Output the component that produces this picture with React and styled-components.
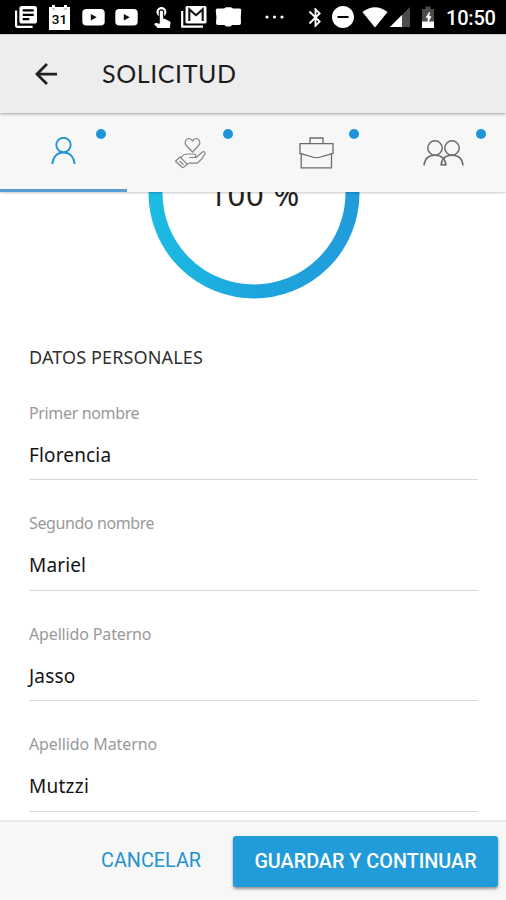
import styled, { createGlobalStyle } from 'styled-components';
import {
	MdLibraryBooks,
	MdTouchApp,
	MdBluetooth,
	MdDoNotDisturbOn,
	MdArrowBack,
} from 'react-icons/md';

const FIELDS = [
	{ id: 1, label: 'Primer nombre', value: 'Florencia', labelSpacing: -0.35, spacing: 0.15 },
	{ id: 2, label: 'Segundo nombre', value: 'Mariel', labelSpacing: -0.4, spacing: 0.15 },
	{ id: 3, label: 'Apellido Paterno', value: 'Jasso', labelSpacing: -0.15, spacing: 0.15 },
	{ id: 4, label: 'Apellido Materno', value: 'Mutzzi', labelSpacing: -0.1, spacing: 0.25 },
];

const CalendarIcon = () => (
	<svg width="23" height="25" viewBox="0 0 23 25">
		<path d="M1 2h3V0h3v2h9V0h3v2h3v23H1z" fill="#fff" />
		<path d="M4 4h3M16 4h3" stroke="#999" />
		<text
			x="11.5"
			y="19"
			textAnchor="middle"
			fontFamily="Roboto, sans-serif"
			fontSize="13.5"
			fontWeight="500"
		>
			31
		</text>
	</svg>
);

const VideoIcon = () => (
	<svg width="23" height="18" viewBox="0 0 23 18">
		<rect x=".3" y="1" width="22.4" height="16.5" rx="4" fill="#fff" />
		<path d="M8.8 6v6.6l6-3.3z" fill="#111" />
	</svg>
);

const MailIcon = () => (
	<svg width="26" height="22" viewBox="0 0 26 22" fill="none">
		<path d="M1.2 5v15.7H22" stroke="#fff" strokeWidth="2.2" />
		<rect x="4.5" y="0" width="21" height="17.5" rx="1.5" fill="#fff" />
		<path d="M8.3 15V3.4l6.7 5.8 6.7-5.8V15" stroke="#111" strokeWidth="2.1" />
	</svg>
);

const CaseIcon = () => (
	<svg width="27" height="20" viewBox="0 0 27 20">
		<path
			d="M2 1.5h7L11 .3h5l2 1.2h7q1.5.5 1.2 2l-.4 6.5.2 6q0 2-2 2h-7l-1.5 1.5h-4L9.5 18H3q-2 0-2-2l.4-6L.8 3.5Q.5 2 2 1.5z"
			fill="#fff"
		/>
	</svg>
);

const DotsIcon = () => (
	<svg width="20" height="4" viewBox="0 0 20 4" fill="#fff">
		<circle cx="2" cy="2" r="1.6" />
		<circle cx="9.5" cy="2" r="1.6" />
		<circle cx="17" cy="2" r="1.6" />
	</svg>
);

const WifiIcon = () => (
	<svg width="26" height="21" viewBox="0 0 26 21">
		<path d="M.4 5Q13-4.6 25.6 5L13 20.6z" fill="#fff" />
	</svg>
);

const SignalIcon = () => (
	<svg width="20" height="20" viewBox="0 0 20 20">
		<path d="M0 20L20 0v20z" fill="#4c4c4c" />
		<path d="M0 20L12 8v12z" fill="#fff" />
	</svg>
);

const BatteryIcon = () => (
	<svg width="14" height="22" viewBox="0 0 14 22">
		<path d="M1 3h3.5V.5h5V3H13v19H1z" fill="#4c4c4c" />
		<path d="M1 15.5h12V22H1z" fill="#fff" />
		<path d="M8.6 6L5 11.5h2v5l3-6H8z" fill="#fff" stroke="#fff" strokeWidth=".7" />
	</svg>
);

const PersonIcon = () => (
	<svg width="26" height="28" viewBox="0 0 26 28" fill="none">
		<g stroke="#2495d3" strokeWidth="1.9">
			<circle cx="13.5" cy="8" r="7.2" />
			<path d="M2.3 27C3 20 7 15.5 13.5 15.5S24 20 24.7 27" />
		</g>
	</svg>
);

const HandHeartIcon = () => (
	<svg width="32" height="32" viewBox="0 0 32 32" fill="none">
		<g stroke="#858585" strokeWidth="1.2" strokeLinejoin="round">
			<path d="M18.5 15L12.300 8.500C10 6 11.500 2 14.500 1.500c2 0 3.300 1 4 2.600.7-1.600 2-2.600 4-2.600C25.500 2 27 6 24.700 8.500z" />
			<path d="M7 20.700C8.500 18 10.500 17 13.500 17H20c2.500 0 2.300 3.500 0 3.500h-4.500H22l5-4.300 1.500-1.200c1.800-.8 3 .4 2.500 2l-3.500 5.200L23 26.200h-8L12.500 27.500" />
			<path d="M6 20l-4.500 4.300 6.300 5.700c.8.7 1.700.6 2.400-.1l2-1.700c.7-.8.6-1.400 0-2z" />
			<path d="M5.500 24l4 3.700" />
		</g>
	</svg>
);

const BriefcaseIcon = () => (
	<svg width="36" height="32" viewBox="0 0 36 32" fill="none">
		<g stroke="#6c6c6c" strokeWidth="1.3">
			<path d="M12 6.5V1h13v5.5" />
			<path d="M2 6.600h33v9.800L22.500 20q-4 1.300-8 0L2 16.400z" />
			<path d="M3.2 16.500v14.300h30.300V16.500" />
		</g>
	</svg>
);

const PeopleIcon = () => (
	<svg width="42" height="28" viewBox="0 0 42 28" fill="none">
		<g stroke="#6c6c6c" strokeWidth="1.5">
			<circle cx="13" cy="8" r="7.2" />
			<circle cx="30" cy="8" r="7.2" />
			<path d="M2 25.500C2.500 19 6.500 15.300 13 15.300S23.500 19 24 25.500" />
			<path d="M19 25.500C19.500 19 23.500 15.300 30 15.300S40.500 19 41 25.500" />
			<path d="M19 24.800h5" />
		</g>
	</svg>
);

const TABS = [
	{ id: 'personal', Icon: PersonIcon, active: true, offset: 1 },
	{ id: 'beneficiary', Icon: HandHeartIcon, offset: 3.5 },
	{ id: 'job', Icon: BriefcaseIcon, offset: 4 },
	{ id: 'references', Icon: PeopleIcon, offset: 5 },
];

const ProgressRing = () => (
	<Ring>
		<svg width="212" height="212" viewBox="0 0 212 212">
			<defs>
				<linearGradient id="ring" x1="0" y1="0" x2="1" y2="0">
					<stop offset="0" stopColor="#1bbbe2" />
					<stop offset=".5" stopColor="#1ca6dd" />
					<stop offset="1" stopColor="#219cdb" />
				</linearGradient>
			</defs>
			<circle
				cx="106"
				cy="106"
				r="98.5"
				fill="none"
				stroke="url(#ring)"
				strokeWidth="14"
			/>
		</svg>
		<Percent>100 %</Percent>
	</Ring>
);

const App = () => {
	return (
		<Screen>
			<GlobalStyle />
			<StatusBar>
				<StatusIcon $left={15} $width={22}>
					<MdLibraryBooks size={22} viewBox="2 2 20 20" />
				</StatusIcon>
				<StatusIcon $left={11} $width={23}>
					<CalendarIcon />
				</StatusIcon>
				<StatusIcon $left={11} $width={23}>
					<VideoIcon />
				</StatusIcon>
				<StatusIcon $left={10} $width={23}>
					<VideoIcon />
				</StatusIcon>
				<StatusIcon $left={15} $width={17}>
					<MdTouchApp size={22} viewBox="2 2 20 20" />
				</StatusIcon>
				<StatusIcon $left={11} $width={26}>
					<MailIcon />
				</StatusIcon>
				<StatusIcon $left={8} $width={27}>
					<CaseIcon />
				</StatusIcon>
				<StatusIcon $left={23} $width={20}>
					<DotsIcon />
				</StatusIcon>
				<StatusIcon $left={23} $width={14}>
					<MdBluetooth size={23} />
				</StatusIcon>
				<StatusIcon $left={10} $width={22}>
					<MdDoNotDisturbOn size={22} viewBox="2 2 20 20" />
				</StatusIcon>
				<StatusIcon $left={8} $width={26}>
					<WifiIcon />
				</StatusIcon>
				<StatusIcon $left={2} $width={20}>
					<SignalIcon />
				</StatusIcon>
				<StatusIcon $left={11} $width={14}>
					<BatteryIcon />
				</StatusIcon>
				<Clock>10:50</Clock>
			</StatusBar>
			<Header>
				<BackButton aria-label="Volver">
					<MdArrowBack size={22} viewBox="4 4 16 16" />
				</BackButton>
				<Title>SOLICITUD</Title>
			</Header>
			<Tabs>
				{TABS.map(({ id, Icon, active, offset }) => (
					<Tab key={id} $active={active} $offset={offset}>
						<Icon />
						<Badge />
					</Tab>
				))}
			</Tabs>
			<Content>
				<ProgressRing />
				<SectionTitle>DATOS PERSONALES</SectionTitle>
				{FIELDS.map((field) => (
					<Field key={field.id}>
						<Label $spacing={field.labelSpacing}>{field.label}</Label>
						<Value $spacing={field.spacing}>{field.value}</Value>
					</Field>
				))}
			</Content>
			<Footer>
				<CancelButton>CANCELAR</CancelButton>
				<SaveButton>GUARDAR Y CONTINUAR</SaveButton>
			</Footer>
		</Screen>
	);
};

export default App;

const GlobalStyle = createGlobalStyle`
	* {
		box-sizing: border-box;
	}

	body {
		margin: 0;
		font-family: 'Noto Sans', sans-serif;
	}

	svg {
		display: block;
		flex-shrink: 0;
	}
`;

const Screen = styled.div`
	display: flex;
	flex-direction: column;
	width: 506px;
	height: 900px;
	overflow: hidden;
	background-color: #fff;
`;

const StatusBar = styled.div`
	display: flex;
	align-items: center;
	height: 34px;
	flex-shrink: 0;
	background-color: #000;
	color: #fff;
	font-family: Roboto, sans-serif;
`;

const StatusIcon = styled.span`
	display: flex;
	align-items: center;
	justify-content: center;
	width: ${({ $width }) => $width}px;
	height: 34px;
	margin-left: ${({ $left }) => $left}px;
	flex-shrink: 0;
`;

const Clock = styled.span`
	margin-left: 11px;
	font-size: 20px;
	font-weight: 500;
	line-height: 34px;
	letter-spacing: -0.2px;
	padding-top: 2px;
`;

const Header = styled.header`
	display: flex;
	align-items: center;
	height: 79px;
	flex-shrink: 0;
	padding-left: 35px;
	background-color: #ededed;
	border-top: 1px solid #c9c9c9;
	z-index: 2;
	box-shadow: 0 1px 3px rgba(0, 0, 0, 0.35);
`;

const BackButton = styled.button`
	display: flex;
	padding: 0;
	border: 0;
	background: none;
	color: #222;
`;

const Title = styled.h1`
	margin: -2px 0 0 45px;
	font-family: Lato, sans-serif;
	font-size: 25px;
	font-weight: 400;
	line-height: 32px;
	letter-spacing: 0.6px;
	color: #1c1c1c;
`;

const Tabs = styled.nav`
	display: grid;
	grid-template-columns: repeat(4, 1fr);
	height: 79px;
	flex-shrink: 0;
	background-color: #f7f7f7;
	z-index: 1;
	box-shadow: 0 0 3px rgba(0, 0, 0, 0.4);
`;

const Tab = styled.div`
	position: relative;
	display: flex;
	align-items: center;
	justify-content: center;
	padding-top: ${({ $offset }) => Math.max($offset * 2 - 4, 0)}px;
	border-bottom: 3px solid ${({ $active }) => ($active ? '#5a9fd4' : 'transparent')};
`;

const Badge = styled.span`
	position: absolute;
	top: 16px;
	right: 20.5px;
	width: 10px;
	height: 10px;
	border-radius: 50%;
	background-color: #1c96d8;
`;

const Content = styled.main`
	flex: 1;
	min-height: 0;
	padding: 0 28px 0 29px;
	overflow: hidden;
`;

const Ring = styled.div`
	display: grid;
	place-items: center;
	width: 212px;
	height: 212px;
	margin: -105px auto 0;

	> * {
		grid-area: 1 / 1;
	}
`;

const Percent = styled.span`
	padding: 2px 0 0 2px;
	font-size: 31px;
	line-height: 36px;
	letter-spacing: 0.8px;
	white-space: nowrap;
	color: #222;
`;

const SectionTitle = styled.h2`
	margin: 45px 0 0;
	font-size: 18px;
	font-weight: 400;
	line-height: 26px;
	letter-spacing: 0.13px;
	white-space: nowrap;
	color: #303030;
`;

const Field = styled.div`
	height: 110.8px;
	padding-top: 31px;
	border-bottom: 1px solid #d8d8d8;

	h2 + & {
		height: 109.8px;
	}
`;

const Label = styled.div`
	font-size: 16px;
	line-height: 24px;
	letter-spacing: ${({ $spacing }) => $spacing}px;
	color: #999;
`;

const Value = styled.div`
	margin-top: 16px;
	font-size: 19px;
	line-height: 28px;
	letter-spacing: ${({ $spacing }) => $spacing}px;
	color: #141414;
`;

const Footer = styled.footer`
	display: flex;
	align-items: center;
	justify-content: flex-end;
	gap: 32px;
	height: 80px;
	flex-shrink: 0;
	padding: 0 8px 0 0;
	background-color: #f7f7f7;
	border-top: 2px solid #ebebeb;
`;

const CancelButton = styled.button`
	padding: 0;
	border: 0;
	background: none;
	font-family: Roboto, sans-serif;
	font-size: 19.8px;
	font-weight: 400;
	line-height: 24px;
	color: #1f93d0;
`;

const SaveButton = styled.button`
	width: 265px;
	height: 51px;
	padding: 0;
	border: 0;
	border-radius: 3px;
	background-color: #219bd9;
	box-shadow: 0 2px 3px rgba(0, 0, 0, 0.4);
	font-family: Roboto, sans-serif;
	font-size: 19.8px;
	font-weight: 500;
	white-space: nowrap;
	color: #fff;
`;
